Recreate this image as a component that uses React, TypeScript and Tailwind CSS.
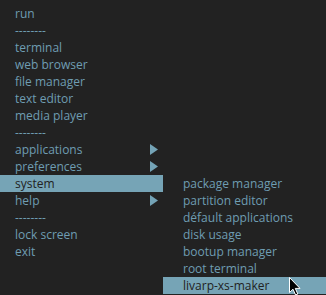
const MAIN: { label: string; sub?: boolean; active?: boolean }[] = [
  { label: 'run' },
  { label: '--------' },
  { label: 'terminal' },
  { label: 'web browser' },
  { label: 'file manager' },
  { label: 'text editor' },
  { label: 'media player' },
  { label: '--------' },
  { label: 'applications', sub: true },
  { label: 'preferences', sub: true },
  { label: 'system', sub: true, active: true },
  { label: 'help', sub: true },
  { label: '--------' },
  { label: 'lock screen' },
  { label: 'exit' },
];

const SYSTEM = [
  'package manager',
  'partition editor',
  'défault applications',
  'disk usage',
  'bootup manager',
  'root terminal',
  'livarp-xs-maker',
];

function Arrow({ dark }: { dark?: boolean }) {
  return (
    <svg width="8" height="11" viewBox="0 0 8 11" className="mr-[5px]">
      <polygon points="0,0 8,5.5 0,11" fill={dark ? '#222222' : '#74a3b6'} />
    </svg>
  );
}

function Cursor() {
  return (
    <svg width="12" height="19" viewBox="0 0 12 19" className="absolute left-[289px] top-[277px]">
      <path d="M0.5 0.5 L0.5 15.5 L4 12.2 L6.6 18 L8.8 17 L6.3 11.4 L11 11.4 Z" fill="#000" stroke="#fff" strokeWidth="1" />
    </svg>
  );
}

export default function App() {
  return (
    <div
      className="relative w-[326px] h-[295px] bg-[#222222] overflow-hidden text-[12px] text-[#6f9db2]"
      style={{ fontFamily: '"Open Sans", "DejaVu Sans", sans-serif' }}
    >
      <div className="flex items-start pt-[5px]">
        {/* main menu */}
        <div className="w-[163px] flex flex-col">
          {MAIN.map((item, i) => (
            <div
              key={i}
              className={`h-[17px] flex items-center justify-between pl-[15px] leading-none ${
                item.active ? 'bg-[#76a4b6] text-[#222222]' : ''
              }`}
            >
              <span>{item.label}</span>
              {item.sub && !item.active && <Arrow />}
            </div>
          ))}
        </div>

        {/* system submenu */}
        <div className="flex-1 flex flex-col mt-[170px]">
          {SYSTEM.map((label, i) => (
            <div
              key={label}
              className={`h-[17px] flex items-center pl-[20px] leading-none ${
                i === SYSTEM.length - 1 ? 'bg-[#76a4b6] text-[#222222]' : ''
              }`}
            >
              {label}
            </div>
          ))}
        </div>
      </div>
      <Cursor />
    </div>
  );
}
